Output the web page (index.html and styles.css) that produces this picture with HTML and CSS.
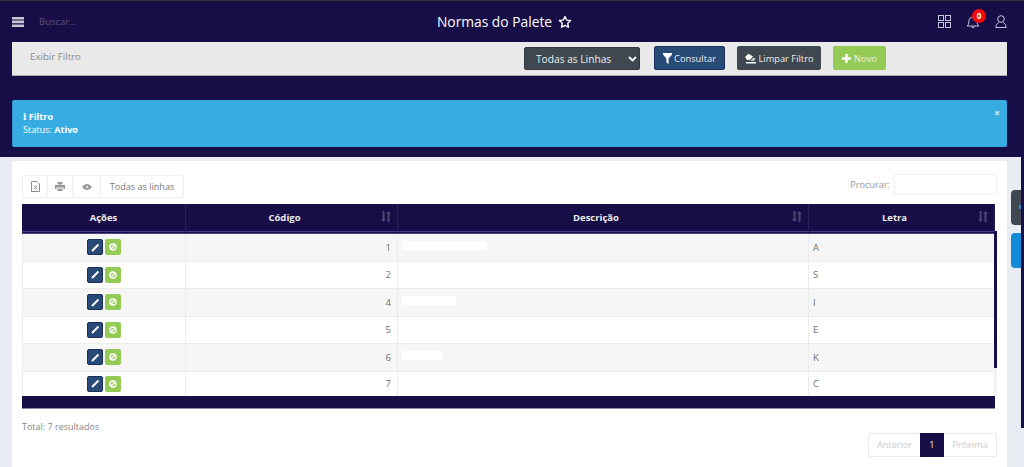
FILE: index.html
```html
<!DOCTYPE html>
<html lang="pt">
<head>
<meta charset="utf-8">
<title>Normas do Palete</title>
<link rel="stylesheet" href="styles.css">
</head>
<body>
<div class="top">
  <header class="header">
    <div class="header-left">
      <svg class="menu-icon" width="12" height="10" viewBox="0 0 12 10"><path d="M0 0h12v2.400H0zM0 3.600h12v2.600H0zM0 7.400h12V10H0z" fill="#c9c9d2"/></svg>
      <span class="search">Buscar...</span>
    </div>
    <div class="title">Normas do Palete
      <svg class="star" width="14" height="14" viewBox="0 0 24 24"><path d="M12 2.500l2.900 6.200 6.800.8-5 4.700 1.300 6.800-6-3.400-6 3.400 1.300-6.800-5-4.700 6.800-.8z" fill="none" stroke="#fff" stroke-width="2.400" stroke-linejoin="round"/></svg>
    </div>
    <div class="header-right">
      <svg width="13" height="13" viewBox="0 0 13 13" fill="none" stroke="#c4c8de" stroke-width="1"><rect x=".5" y=".5" width="5" height="5"/><rect x="7.500" y=".5" width="5" height="5"/><rect x=".5" y="7.500" width="5" height="5"/><rect x="7.500" y="7.500" width="5" height="5"/></svg>
      <span class="bell">
        <svg width="14" height="14" viewBox="0 0 14 14" fill="none" stroke="#c4c8de" stroke-width="1"><path d="M1 11c1.500-1 1.800-2 1.800-4.500C2.800 3.500 4.800 2 7 2s4.200 1.500 4.200 4.500c0 2.500.3 3.500 1.800 4.500zM5.500 11.500c.3 1.700 2.700 1.700 3 0"/></svg>
        <span class="badge">0</span>
      </span>
      <svg width="12" height="13" viewBox="0 0 12 13" fill="none" stroke="#c4c8de" stroke-width="1"><circle cx="6" cy="4" r="3.300"/><path d="M.8 12.500c.2-3 2-4.500 3-5M11.200 12.500c-.2-3-2-4.500-3-5M.8 12.500h10.400"/></svg>
    </div>
  </header>

  <div class="filter-bar">
    <span class="show-filter">Exibir Filtro</span>
    <div class="filter-actions">
      <div class="select">Todas as Linhas
        <svg width="9" height="6" viewBox="0 0 9 6"><path d="M1 1l3.500 3.500L8 1" fill="none" stroke="#fff" stroke-width="1.800"/></svg>
      </div>
      <a class="btn btn-blue">
        <svg width="9" height="11" viewBox="0 0 9 11"><path d="M0 0h9v1.500L5.600 5.500V11L3.400 9.500v-4L0 1.500z" fill="#fff"/></svg>Consultar</a>
      <a class="btn btn-dark">
        <svg width="12" height="11" viewBox="0 0 12 11"><path d="M1 4L4.500 .8 9 3.500 6 7H3z" fill="#fff"/><path d="M2 9h10v1.500H2z" fill="#fff"/><path d="M9.500 4.500L11.500 6 9.500 8H6.500z" fill="#cfd2d5"/></svg>Limpar Filtro</a>
      <a class="btn btn-green">
        <svg width="9" height="9" viewBox="0 0 9 9"><path d="M3.300 0h2.400v3.300H9v2.400H5.700V9H3.300V5.700H0V3.300h3.300z" fill="#fff"/></svg>Novo</a>
    </div>
  </div>

  <div class="alert">
    <span class="alert-close">×</span>
    <div class="alert-title"><span class="info">i</span> Filtro</div>
    <div>Status: <b>Ativo</b></div>
  </div>
</div>

<div class="content">
  <main class="card">
    <div class="table-tools">
      <div class="tool-group">
        <a class="tool">
          <svg width="9" height="11" viewBox="0 0 9 11" fill="none" stroke="#8a8a8a" stroke-width="1"><path d="M.5.500h5.500L8.500 3v7.500h-8z"/><path d="M3 4.500l3 4M6 4.500l-3 4"/></svg>
        </a>
        <a class="tool">
          <svg width="10" height="9" viewBox="0 0 10 9"><path d="M2.500 0h5v2.500h-5zM0 3h10v4H8.500V5.500h-7V7H0zM2.500 6.500h5V9h-5z" fill="#999"/></svg>
        </a>
        <a class="tool">
          <svg width="10" height="6" viewBox="0 0 10 6"><path d="M0 3C2 .7 3.500 0 5 0s3 .7 5 3C8 5.300 6.500 6 5 6S2 5.300 0 3z" fill="#999"/><circle cx="5" cy="3" r="1.300" fill="#ddd"/></svg>
        </a>
        <a class="tool tool-text">Todas as linhas</a>
      </div>
      <label class="search-box">Procurar: <input type="text"></label>
    </div>

    <div class="table-wrap">
      <table class="grid">
        <colgroup>
          <col class="col-actions"><col class="col-code"><col class="col-desc"><col class="col-letter">
        </colgroup>
        <thead>
          <tr>
            <th>Ações</th>
            <th class="sortable">Código<svg class="sort" width="10" height="11" viewBox="0 0 10 11"><path d="M2.500 11L0 8h1.500V0h2v8H5zM7.500 0L10 3H8.500v8h-2V3H5z" fill="#4d4670"/></svg></th>
            <th class="sortable">Descrição<svg class="sort" width="10" height="11" viewBox="0 0 10 11"><path d="M2.500 11L0 8h1.500V0h2v8H5zM7.500 0L10 3H8.500v8h-2V3H5z" fill="#4d4670"/></svg></th>
            <th class="sortable">Letra<svg class="sort" width="10" height="11" viewBox="0 0 10 11"><path d="M2.500 11L0 8h1.500V0h2v8H5zM7.500 0L10 3H8.500v8h-2V3H5z" fill="#4d4670"/></svg></th>
          </tr>
        </thead>
        <tbody>
          <tr>
            <td class="actions"><span class="edit"><svg width="9" height="9" viewBox="0 0 9 9"><path d="M1 8L7.500 1.500" stroke="#fff" stroke-width="2"/></svg></span><span class="block"><svg width="8" height="8" viewBox="0 0 8 8" fill="none" stroke="#fff" stroke-width="1.400"><circle cx="4" cy="4" r="3"/><path d="M2 6l4-4"/></svg></span></td>
            <td class="num">1</td><td class="desc"><span class="hidden-text w85"></span></td><td>A</td>
          </tr>
          <tr>
            <td class="actions"><span class="edit"><svg width="9" height="9" viewBox="0 0 9 9"><path d="M1 8L7.500 1.500" stroke="#fff" stroke-width="2"/></svg></span><span class="block"><svg width="8" height="8" viewBox="0 0 8 8" fill="none" stroke="#fff" stroke-width="1.400"><circle cx="4" cy="4" r="3"/><path d="M2 6l4-4"/></svg></span></td>
            <td class="num">2</td><td class="desc"></td><td>S</td>
          </tr>
          <tr>
            <td class="actions"><span class="edit"><svg width="9" height="9" viewBox="0 0 9 9"><path d="M1 8L7.500 1.500" stroke="#fff" stroke-width="2"/></svg></span><span class="block"><svg width="8" height="8" viewBox="0 0 8 8" fill="none" stroke="#fff" stroke-width="1.400"><circle cx="4" cy="4" r="3"/><path d="M2 6l4-4"/></svg></span></td>
            <td class="num">4</td><td class="desc"><span class="hidden-text w54"></span></td><td>I</td>
          </tr>
          <tr>
            <td class="actions"><span class="edit"><svg width="9" height="9" viewBox="0 0 9 9"><path d="M1 8L7.500 1.500" stroke="#fff" stroke-width="2"/></svg></span><span class="block"><svg width="8" height="8" viewBox="0 0 8 8" fill="none" stroke="#fff" stroke-width="1.400"><circle cx="4" cy="4" r="3"/><path d="M2 6l4-4"/></svg></span></td>
            <td class="num">5</td><td class="desc"></td><td>E</td>
          </tr>
          <tr>
            <td class="actions"><span class="edit"><svg width="9" height="9" viewBox="0 0 9 9"><path d="M1 8L7.500 1.500" stroke="#fff" stroke-width="2"/></svg></span><span class="block"><svg width="8" height="8" viewBox="0 0 8 8" fill="none" stroke="#fff" stroke-width="1.400"><circle cx="4" cy="4" r="3"/><path d="M2 6l4-4"/></svg></span></td>
            <td class="num">6</td><td class="desc"><span class="hidden-text w40"></span></td><td>K</td>
          </tr>
          <tr class="last-row">
            <td class="actions"><span class="edit"><svg width="9" height="9" viewBox="0 0 9 9"><path d="M1 8L7.500 1.500" stroke="#fff" stroke-width="2"/></svg></span><span class="block"><svg width="8" height="8" viewBox="0 0 8 8" fill="none" stroke="#fff" stroke-width="1.400"><circle cx="4" cy="4" r="3"/><path d="M2 6l4-4"/></svg></span></td>
            <td class="num">7</td><td class="desc"></td><td>C</td>
          </tr>
        </tbody>
      </table>
      <div class="scroll-track"><div class="scroll-thumb"></div></div>
      <div class="table-foot"></div>
    </div>

    <div class="table-bottom">
      <span class="total">Total: 7 resultados</span>
      <div class="pager">
        <a class="page">Anterior</a><a class="page current">1</a><a class="page">Próxima</a>
      </div>
    </div>
  </main>
</div>

<div class="side-strip"></div>
<div class="side-tab side-tab-dark"></div>
<div class="side-tab side-tab-blue"></div>
</body>
</html>
```

FILE: styles.css
```css
* {
  box-sizing: border-box;
}
html, body {
  height: 100%;
  overflow: hidden;
}
body {
  margin: 0;
  background: #e9edf3;
  color: #666;
  font-family: "Open Sans", "Noto Sans", sans-serif;
  font-size: 10px;
}
a {
  text-decoration: none;
}

/* navy top area */
.top {
  height: 157px;
  background: #170d47;
  border-top: 1px solid #3a3038;
  padding: 0 17px 0 12px;
}
.header {
  height: 41px;
  display: grid;
  grid-template-columns: 1fr auto 1fr;
  align-items: center;
}
.header-left {
  display: flex;
  align-items: center;
  gap: 15px;
}
.search {
  color: #5b5480;
  font-size: 9.5px;
}
.title {
  display: flex;
  align-items: center;
  gap: 6px;
  margin-right: 10px;
  color: #fff;
  font-size: 13.8px;
}
.header-right {
  display: flex;
  align-items: center;
  justify-content: flex-end;
  gap: 15px;
}
.bell {
  position: relative;
  display: flex;
}
.badge {
  position: absolute;
  top: -6px;
  left: 6px;
  width: 14px;
  height: 14px;
  border-radius: 50%;
  background: #f30a0a;
  color: #fff;
  font-size: 8px;
  font-weight: 700;
  line-height: 14px;
  text-align: center;
}

/* filter bar */
.filter-bar {
  height: 34px;
  background: #e9e9e9;
  border-bottom: 1px solid #aaa8b8;
  display: flex;
  padding-left: 18px;
}
.show-filter {
  width: 52px;
  color: #8a8a8a;
  font-size: 9.7px;
  line-height: 30px;
}
.filter-actions {
  display: flex;
  align-items: flex-start;
  margin-left: 442px;
  padding-top: 4px;
}
.select {
  width: 116px;
  height: 23px;
  margin-top: 1px;
  margin-right: 14px;
  padding: 0 2px 0 11px;
  background: #3f4850;
  border: 1px solid #333a42;
  border-radius: 2px;
  color: #f0f0f0;
  font-size: 10.2px;
  display: flex;
  align-items: center;
  justify-content: space-between;
}
.btn {
  height: 24px;
  display: flex;
  align-items: center;
  justify-content: center;
  gap: 2px;
  border-radius: 2px;
  color: #eee;
  font-size: 9.3px;
}
.btn-blue {
  width: 71px;
  margin-right: 12px;
  background: #284a76;
  border: 1px solid #1a2f5c;
}
.btn-dark {
  width: 84px;
  margin-right: 12px;
  background: #3f4850;
  border: 1px solid #3f4850;
}
.btn-green {
  width: 53px;
  gap: 3px;
  background: #93cb54;
  border: 1px solid #93cb54;
}

/* info alert */
.alert {
  position: relative;
  height: 47px;
  margin-top: 24px;
  padding: 11px 10px 0;
  background: #36ace2;
  border-radius: 2px;
  border-left: 1px solid #2b8fbd;
  color: #fff;
  font-size: 9.1px;
  line-height: 12.5px;
}
.alert-title {
  font-weight: 700;
}
.info {
  font-family: "DejaVu Serif", serif;
  font-weight: 700;
}
.alert-close {
  position: absolute;
  top: 7px;
  right: 7px;
  color: #d4ecf8;
  font-size: 10px;
  font-weight: 700;
  line-height: 12px;
}

/* card */
.content {
  padding: 4px 17px 0 12px;
}
.card {
  height: 310px;
  background: #fff;
  padding: 13px 10px 0;
}
.table-tools {
  height: 30px;
  display: flex;
  justify-content: space-between;
}
.tool-group {
  height: 23px;
  display: flex;
  border: 1px solid #efefef;
  border-radius: 2px;
  margin-top: 1px;
}
.tool {
  width: 25px;
  display: flex;
  align-items: center;
  justify-content: center;
  border-right: 1px solid #efefef;
}
.tool:nth-child(3) {
  width: 28px;
}
.tool-text {
  width: 82px;
  border-right: 0;
  color: #777;
  font-size: 9.1px;
}
.search-box {
  display: flex;
  gap: 4px;
  height: 20px;
  align-items: center;
  color: #999;
  font-size: 9.2px;
}
.search-box input {
  width: 103px;
  height: 21px;
  border: 1px solid #f0f0f0;
  border-radius: 2px;
}

/* table */
.table-wrap {
  position: relative;
  width: 973px;
}
.grid {
  width: 973px;
  border-collapse: separate;
  border-spacing: 0;
  table-layout: fixed;
  font-size: 9.5px;
}
.col-actions {
  width: 164px;
}
.col-code {
  width: 212px;
}
.col-desc {
  width: 411px;
}
.grid th {
  position: relative;
  height: 30px;
  padding: 0 0 1px;
  background: #170d47;
  border-right: 1px solid #28205c;
  border-bottom: 3px double #4a4088;
  color: #eee;
  font-size: 9.5px;
  font-weight: 700;
  text-align: center;
}
.grid th.sortable {
  padding-right: 14px;
}
.sort {
  position: absolute;
  right: 6px;
  top: 7px;
}
.grid td {
  height: 27.5px;
  padding: 0 4px;
  border-right: 1px solid #ececec;
  border-bottom: 1px solid #ececec;
  color: #707070;
}
.grid td:first-child {
  border-left: 1px solid #ececec;
}
.grid tbody tr:nth-child(odd) td {
  background: #f6f6f6;
}
.grid .last-row td {
  height: 24px;
  border-bottom: 0;
}
.grid td.num {
  text-align: right;
  padding-right: 6px;
}
.grid td.actions {
  text-align: center;
  padding: 0;
  font-size: 0;
}
.edit, .block {
  display: inline-flex;
  align-items: center;
  justify-content: center;
  width: 16px;
  height: 16px;
  border-radius: 2px;
  vertical-align: middle;
}
.edit {
  background: #284a76;
  border: 1px solid #1a2f5c;
  margin-right: 2px;
}
.block {
  background: #93cb54;
}
.hidden-text {
  display: block;
  height: 9px;
  background: #fff;
  margin-bottom: 3px;
}
.w85 {
  width: 85px;
}
.w54 {
  width: 54px;
}
.w40 {
  width: 40px;
}
.scroll-track {
  position: absolute;
  top: 27px;
  right: -2px;
  width: 3px;
  height: 164px;
  background: #f1f1f1;
}
.scroll-thumb {
  height: 137px;
  background: #170d47;
}
.table-foot {
  height: 13px;
  background: #170d47;
  border-bottom: 1px solid #8d88aa;
}

/* bottom of card */
.table-bottom {
  position: relative;
  display: flex;
  justify-content: space-between;
  padding-top: 11px;
}
.total {
  color: #888;
  font-size: 9px;
  line-height: 13px;
}
.pager {
  display: flex;
  height: 24px;
  margin-top: 13px;
  border: 1px solid #ececec;
  border-radius: 2px;
}
.page {
  width: 52px;
  line-height: 22px;
  text-align: center;
  color: #ccc;
  font-size: 9.2px;
}
.page:first-child {
  width: 51px;
}
.page.current {
  width: 24px;
  height: 24px;
  margin-top: -1px;
  line-height: 24px;
  background: #170d47;
  color: #eee;
}

/* things at the window's right edge */
.side-strip {
  position: absolute;
  top: 157px;
  right: 0;
  width: 3px;
  height: 271px;
  background: #170d47;
}
.side-tab {
  position: absolute;
  right: 3px;
  width: 10px;
  height: 35px;
  border-radius: 4px 0 0 4px;
}
.side-tab-dark {
  top: 190px;
  background: #3f4850;
}
.side-tab-dark::after {
  content: "";
  position: absolute;
  top: 15px;
  right: 0;
  width: 2px;
  height: 4px;
  background: #2a8fd0;
}
.side-tab-blue {
  top: 233px;
  background: #128ad6;
}
```
